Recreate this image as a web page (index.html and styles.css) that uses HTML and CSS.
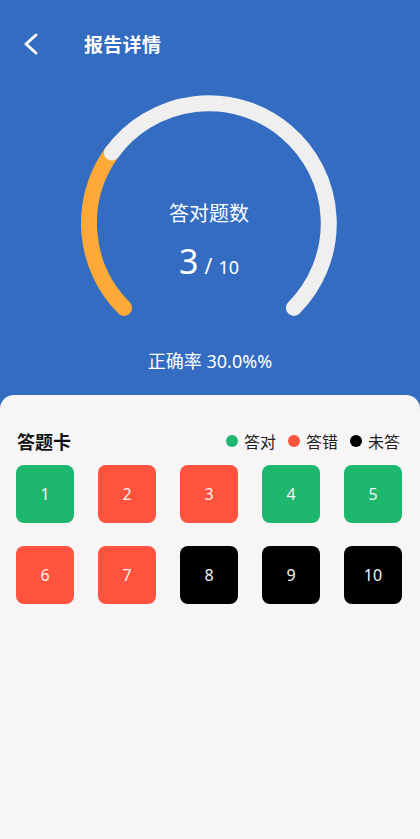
FILE: index.html
```html
<!DOCTYPE html>
<html>
<head>
    <title>报告详情</title>
    <link rel="stylesheet" href="styles.css">
</head>
<body>
    <div class="top">
        <div class="header">
            <svg class="back" width="20" height="24" viewBox="0 0 20 24">
                <path d="M14 3 L4 12 L14 21" fill="none" stroke="#fff" stroke-width="3" stroke-linecap="round" stroke-linejoin="round"/>
            </svg>
            <p class="title">报告详情</p>
        </div>

        <div class="gauge">
            <svg width="272" height="224" viewBox="0 0 272 224">
                <!-- 30% of 270deg, starting bottom-left -->
                <path d="M51.1 212.9 A120 120 0 0 1 38.9 57.5" fill="none" stroke="#ffaa38" stroke-width="16" stroke-linecap="round"/>
                <path d="M38.9 57.5 A120 120 0 1 1 220.9 212.9" fill="none" stroke="#efefef" stroke-width="16" stroke-linecap="round"/>
            </svg>
            <div class="gauge-text">
                <p class="label">答对题数</p>
                <p class="score"><span class="num">3</span> <span class="slash">/</span> <span class="total">10</span></p>
            </div>
        </div>

        <p class="rate">正确率 30.0%%</p>
    </div>

    <div class="card">
        <div class="card-head">
            <p class="card-title">答题卡</p>
            <div class="legend">
                <span class="dot green"></span><span>答对</span>
                <span class="dot red"></span><span>答错</span>
                <span class="dot black"></span><span>未答</span>
            </div>
        </div>
        <div class="grid">
            <div class="cell green">1</div>
            <div class="cell red">2</div>
            <div class="cell red">3</div>
            <div class="cell green">4</div>
            <div class="cell green">5</div>
            <div class="cell red">6</div>
            <div class="cell red">7</div>
            <div class="cell black">8</div>
            <div class="cell black">9</div>
            <div class="cell black">10</div>
        </div>
    </div>
</body>
</html>
```

FILE: styles.css
```css
body {
    margin: 0;
    background-color: #336cc1;
    font-family: "Noto Sans", "Noto Sans CJK SC", sans-serif;
    width: 420px;
    height: 839px;
    overflow: hidden;
    display: flex;
    flex-direction: column;
}
p {
    margin: 0;
}

.top {
    color: #fff;
}
.header {
    height: 88px;
    display: flex;
    align-items: center;
    padding-left: 22px;
}
.header .back {
    display: block;
}
.header .title {
    margin-left: 42px;
    font-size: 19px;
    font-weight: bold;
    letter-spacing: 0.3px;
}

.gauge {
    position: relative;
    width: 272px;
    height: 224px;
    margin: 7px 0 0 73px;
}
.gauge svg {
    display: block;
}
.gauge-text {
    position: absolute;
    left: 0;
    right: 0;
    top: 105px;
    text-align: center;
}
.gauge-text .label {
    font-size: 20px;
    line-height: 28px;
}
.gauge-text .score {
    margin-top: 13px;
    line-height: 40px;
}
.score .num {
    font-size: 34px;
}
.score .slash {
    font-size: 21px;
    margin: 0 2px;
}
.score .total {
    font-size: 18px;
}

.rate {
    text-align: center;
    font-size: 18px;
    line-height: 24px;
    margin-top: 30px;
}

.card {
    flex: 1;
    margin-top: 22px;
    background-color: #f7f5f5;
    border-radius: 14px 14px 0 0;
    padding: 34px 18px 0 16px;
}
.card-head {
    display: flex;
    justify-content: space-between;
    align-items: center;
    height: 24px;
    padding: 0 2px 0 1px;
}
.card-title {
    font-size: 18px;
    font-weight: bold;
    color: #111;
}
.legend {
    display: flex;
    align-items: center;
    font-size: 16px;
    color: #222;
}
.legend .dot {
    width: 12px;
    height: 12px;
    border-radius: 50%;
    margin: 0 6px 0 12px;
}
.legend .dot:first-child {
    margin-left: 0;
}

.grid {
    display: grid;
    grid-template-columns: repeat(5, 58px);
    justify-content: space-between;
    row-gap: 23px;
    margin-top: 12px;
}
.cell {
    height: 58px;
    border-radius: 8px;
    display: flex;
    align-items: center;
    justify-content: center;
    color: #f4f4f4;
    font-size: 16px;
}

.green {
    background-color: #1db76e;
}
.red {
    background-color: #ff533f;
}
.black {
    background-color: #000;
}
```
